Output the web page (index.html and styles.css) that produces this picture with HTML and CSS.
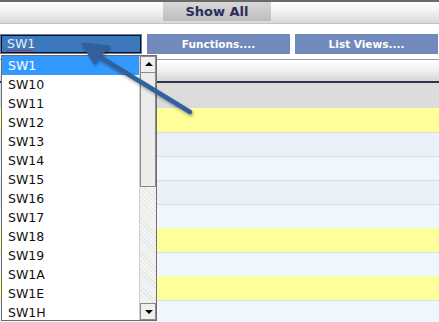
FILE: index.html
```html
<!DOCTYPE html>
<html lang="en">
<head>
  <meta charset="UTF-8" />
  <title>Switch list</title>
  <link rel="stylesheet" href="styles.css">
</head>
<body>
  <div class="page">
    <div class="top-bar">
      <button class="show-all">Show All</button>
    </div>

    <div class="tool-row">
      <div class="picker"><span class="picker-text">SW1</span></div>
      <button class="tool-btn">Functions....</button>
      <button class="tool-btn">List Views....</button>
    </div>

    <div class="sub-bar"></div>

    <div class="grid">
      <div class="grid-head"></div>
      <div class="row yellow"></div>
      <div class="row odd"></div>
      <div class="row even"></div>
      <div class="row odd"></div>
      <div class="row even"></div>
      <div class="row yellow"></div>
      <div class="row even"></div>
      <div class="row yellow"></div>
      <div class="row even"></div>
    </div>

    <!-- open dropdown -->
    <div class="dropdown">
      <ul class="options">
        <li class="selected">SW1</li>
        <li>SW10</li>
        <li>SW11</li>
        <li>SW12</li>
        <li>SW13</li>
        <li>SW14</li>
        <li>SW15</li>
        <li>SW16</li>
        <li>SW17</li>
        <li>SW18</li>
        <li>SW19</li>
        <li>SW1A</li>
        <li>SW1E</li>
        <li>SW1H</li>
      </ul>
      <div class="scrollbar">
        <div class="scroll-btn up"></div>
        <div class="scroll-thumb"></div>
        <div class="scroll-track"></div>
        <div class="scroll-btn down"></div>
      </div>
    </div>

    <!-- annotation arrow -->
    <svg class="pointer" width="439" height="322" viewBox="0 0 439 322">
      <defs>
        <filter id="shade" x="-20%" y="-20%" width="140%" height="140%">
          <feDropShadow dx="1" dy="2" stdDeviation="1.5" flood-color="#000" flood-opacity="0.35"/>
        </filter>
      </defs>
      <g filter="url(#shade)" fill="#30609a" stroke="#30609a">
        <line x1="190" y1="112" x2="100" y2="57" stroke-width="4.5" stroke-linecap="round"/>
        <polygon points="82,43 110,46 94,64" stroke-width="1" stroke-linejoin="round"/>
      </g>
    </svg>
  </div>
</body>
</html>
```

FILE: styles.css
```css
body {
  margin: 0;
  background-color: #fff;
  font-family: "DejaVu Sans", Verdana, sans-serif;
}

.page {
  position: relative;
  width: 439px;
  height: 322px;
  overflow: hidden;
}

.top-bar {
  height: 21px;
  border-top: 2px solid #6a6a6a;
  border-bottom: 1px solid #c4c4c4;
  background: linear-gradient(to bottom, #ffffff 0%, #f2f2f2 45%, #d9d9d9 100%);
  display: flex;
  justify-content: center;
}

.show-all {
  width: 108px;
  height: 19px;
  margin-left: -5px;
  border: none;
  padding: 0;
  background: linear-gradient(to bottom, #d8d8d8 0%, #bdbdbd 100%);
  color: #2c2c5c;
  font-family: "DejaVu Sans", Verdana, sans-serif;
  font-weight: bold;
  font-size: 13px;
}

.tool-row {
  display: flex;
  gap: 5px;
  margin-top: 10px;
  height: 20px;
}

.picker {
  width: 142px;
  box-sizing: border-box;
  background-color: #5b7fb5;
  padding: 1px;
  display: flex;
}

.picker-text {
  flex: 1;
  border: 1px solid #111;
  background-color: #3c78bc;
  color: #e6ecf6;
  font-size: 12.5px;
  line-height: 16px;
  padding-left: 5px;
  text-decoration: underline dotted #e01010;
  text-underline-offset: 2px;
}

.tool-btn {
  width: 143px;
  border: none;
  padding: 0;
  background-color: #7289bb;
  color: #fff;
  font-family: "DejaVu Sans", Verdana, sans-serif;
  font-weight: bold;
  font-size: 10.5px;
}

.sub-bar {
  margin-top: 5px;
  height: 21px;
  border-top: 1px solid #9a9a9a;
  border-bottom: 2px solid #2e3550;
  background: linear-gradient(to bottom, #ffffff 0%, #f0f0f0 50%, #d6d6d6 100%);
}

.grid-head {
  height: 25px;
  background-color: #dcdcdc;
}

.row {
  height: 23px;
  border-top: 1px solid #d8dde4;
}

.row.yellow {
  background-color: #ffff99;
  border-top: none;
  height: 24px;
}

.row.odd {
  background-color: #eaf0f8;
}

.row.even {
  background-color: #f0f6fe;
}

.dropdown {
  position: absolute;
  left: 1px;
  top: 55px;
  width: 156px;
  height: 266px;
  box-sizing: border-box;
  border: 1px solid #6e6e6e;
  background-color: #fff;
  display: flex;
}

.options {
  list-style: none;
  margin: 0;
  padding: 0;
  flex: 1;
  overflow: hidden;
}

.options li {
  height: 19px;
  line-height: 19px;
  padding-left: 6px;
  font-size: 12.5px;
  color: #111;
}

.options li.selected {
  background-color: #3399ff;
  color: #fff;
}

.scrollbar {
  width: 16px;
  display: flex;
  flex-direction: column;
  border-left: 1px solid #cfcfcf;
}

.scroll-btn {
  height: 17px;
  background-color: #f0f0f0;
  border: 1px solid #8a8a8a;
  box-sizing: border-box;
  position: relative;
}

.scroll-btn::after {
  content: "";
  position: absolute;
  left: 4px;
  border-left: 4px solid transparent;
  border-right: 4px solid transparent;
}

.scroll-btn.up::after {
  top: 5px;
  border-bottom: 4px solid #000;
}

.scroll-btn.down::after {
  top: 6px;
  border-top: 4px solid #000;
}

.scroll-thumb {
  height: 114px;
  background-color: #ececec;
  border: 1px solid #8a8a8a;
  border-top: none;
  box-sizing: border-box;
}

.scroll-track {
  flex: 1;
  background-color: #f4f4f4;
  background-image: repeating-linear-gradient(45deg, #e6e6e6 0 1px, transparent 1px 3px);
}

.pointer {
  position: absolute;
  left: 0;
  top: 0;
  pointer-events: none;
}
```
